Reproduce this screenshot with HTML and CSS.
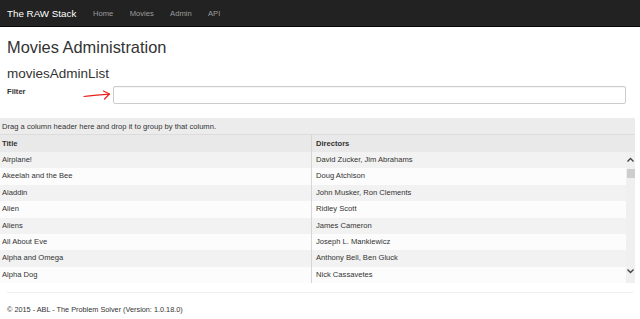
FILE: index.html
```html
<!DOCTYPE html>
<html lang="en">
<head>
    <meta charset="UTF-8">
    <meta name="viewport" content="width=device-width, initial-scale=1.0">
    <title>Movies Administration - The RAW Stack</title>
    <link rel="stylesheet" href="styles.css">
</head>
<body>
    <div class="navbar">
        <a class="brand" href="#">The RAW Stack</a>
        <a class="nav-link" href="#">Home</a>
        <a class="nav-link" href="#">Movies</a>
        <a class="nav-link" href="#">Admin</a>
        <a class="nav-link" href="#">API</a>
    </div>
    <div class="container">
        <h1>Movies Administration</h1>
        <h2>moviesAdminList</h2>
        <div class="filter-row">
            <label for="filter">Filter</label>
            <svg class="arrow" width="30" height="12" viewBox="0 0 30 12">
                <path d="M1 7.5 C 8 6.5, 16 6, 26 5.2" fill="none" stroke="#e8231f" stroke-width="1.2" stroke-linecap="round"/>
                <path d="M20.5 2 L26.5 5 L21.5 10" fill="none" stroke="#e8231f" stroke-width="1.2" stroke-linecap="round" stroke-linejoin="round"/>
            </svg>
            <input type="text" id="filter" name="filter">
        </div>
    </div>
    <div class="grid">
        <div class="group-panel">Drag a column header here and drop it to group by that column.</div>
        <div class="grid-header">
            <div class="cell">Title</div>
            <div class="cell col-2">Directors</div>
            <div class="sb-spacer"></div>
        </div>
        <div class="grid-body">
            <div class="rows" id="rows"></div>
            <div class="scrollbar">
                <svg class="chev" width="9" height="8" viewBox="0 0 9 8"><path d="M1.5 5.5 L4.5 2.5 L7.5 5.5" fill="none" stroke="#444" stroke-width="1.4"/></svg>
                <div class="thumb"></div>
                <div class="track"></div>
                <svg class="chev" width="9" height="8" viewBox="0 0 9 8"><path d="M1.5 2.5 L4.5 5.5 L7.5 2.5" fill="none" stroke="#444" stroke-width="1.4"/></svg>
            </div>
        </div>
    </div>
    <div class="container">
        <hr>
        <footer>&copy; 2015 - ABL - The Problem Solver (Version: 1.0.18.0)</footer>
    </div>
    <script>
        const movies = [
            ['Airplane!', 'David Zucker, Jim Abrahams'],
            ['Akeelah and the Bee', 'Doug Atchison'],
            ['Aladdin', 'John Musker, Ron Clements'],
            ['Alien', 'Ridley Scott'],
            ['Aliens', 'James Cameron'],
            ['All About Eve', 'Joseph L. Mankiewicz'],
            ['Alpha and Omega', 'Anthony Bell, Ben Gluck'],
            ['Alpha Dog', 'Nick Cassavetes']
        ];
        const rows = document.getElementById('rows');
        for (let i = 0; i < movies.length; i++) {
            const row = document.createElement('div');
            row.className = i % 2 === 0 ? 'row alt' : 'row';
            row.innerHTML = `
                <div class="cell">${movies[i][0]}</div>
                <div class="cell col-2">${movies[i][1]}</div>
            `;
            rows.appendChild(row);
        }
    </script>
</body>
</html>
```

FILE: styles.css
```css
body {
    font-family: "Liberation Sans", Arial, sans-serif;
    color: #333;
    margin: 0;
    background-color: #fff;
}

.navbar {
    display: flex;
    align-items: center;
    height: 26px;
    padding: 0 7px;
    background-color: #222;
    border-bottom: 1px solid #080808;
}

.navbar a {
    text-decoration: none;
}

.brand {
    color: #fff;
    font-size: 9.8px;
    margin-right: 8.5px;
}

.nav-link {
    color: #9d9d9d;
    font-size: 7.6px;
    padding: 0 8.2px;
}

.container {
    padding: 0 7px;
}

h1 {
    font-size: 16.4px;
    font-weight: normal;
    margin: 10px 0 0;
    line-height: 20px;
}

h2 {
    font-size: 13.5px;
    font-weight: normal;
    margin: 9px 0 0;
    line-height: 16px;
}

.filter-row {
    display: flex;
    align-items: flex-start;
    margin-top: 4px;
}

.filter-row label {
    font-weight: bold;
    font-size: 7.6px;
    width: 76px;
    margin-top: 1px;
}

.arrow {
    margin-top: 3px;
}

.filter-row input {
    flex: 1;
    height: 18px;
    margin: 0 7px 0 0;
    padding: 0 5px;
    border: 1px solid #ccc;
    border-radius: 2px;
    box-sizing: border-box;
    box-shadow: inset 0 1px 1px rgba(0, 0, 0, 0.04);
}

.grid {
    margin: 14px 5px 0 0;
    font-size: 7.6px;
    color: #333;
}

.group-panel {
    background-color: #ececec;
    height: 17px;
    line-height: 17px;
    padding-left: 2px;
    border-bottom: 1px solid #dcdcdc;
    box-sizing: border-box;
}

.grid-header {
    display: flex;
    background-color: #e9e9e9;
    height: 17px;
    line-height: 17px;
    font-weight: bold;
}

.cell {
    width: 311px;
    padding-left: 2px;
    box-sizing: border-box;
    white-space: nowrap;
}

.col-2 {
    width: 315px;
    padding-left: 4px;
    border-left: 1px solid #d6d6d6;
}

.sb-spacer {
    flex: 1;
}

.grid-body {
    display: flex;
    height: 131.2px;
}

.rows {
    width: 626px;
}

.row {
    display: flex;
    height: 16.4px;
    line-height: 16.4px;
    background-color: #fcfcfc;
}

.row.alt {
    background-color: #f2f2f2;
}

.scrollbar {
    flex: 1;
    display: flex;
    flex-direction: column;
    align-items: center;
    background-color: #f0f0f0;
    padding: 4px 0 8px;
    box-sizing: border-box;
}

.thumb {
    width: 8px;
    height: 9px;
    margin-top: 5px;
    background-color: #cdcdcd;
}

.track {
    flex: 1;
}

hr {
    border: 0;
    border-top: 1px solid #eee;
    margin: 9px 0 0;
}

footer {
    font-size: 7.3px;
    margin-top: 12px;
}
```
